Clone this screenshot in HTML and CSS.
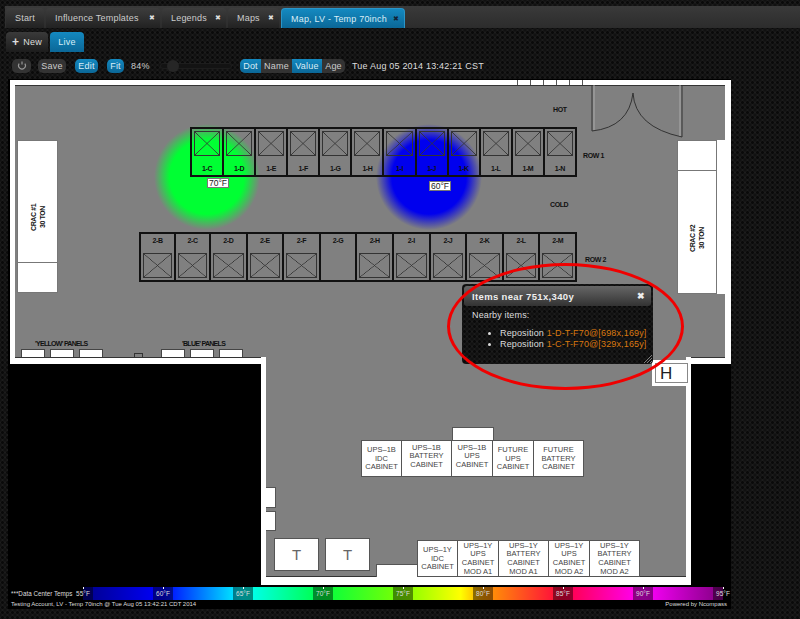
FILE: index.html
```html
<!DOCTYPE html>
<html lang="en">
<head>
    <meta charset="UTF-8">
    <title>Map, LV - Temp 70inch</title>
    <link rel="stylesheet" href="styles.css">
</head>
<body>

    <!-- Main tabs -->
    <div class="tabs">
        <div class="tab tab-start">Start</div>
        <div class="tab tab-templates">Influence Templates <span class="close">&#10006;</span></div>
        <div class="tab tab-legends">Legends <span class="close">&#10006;</span></div>
        <div class="tab tab-maps">Maps <span class="close">&#10006;</span></div>
        <div class="tab tab-active">Map, LV - Temp 70inch <span class="close">&#10006;</span></div>
    </div>

    <!-- Sub tabs -->
    <div class="subtabs">
        <div class="subtab subtab-new"><b>+</b> New</div>
        <div class="subtab subtab-live">Live</div>
    </div>

    <!-- Toolbar -->
    <div class="toolbar">
        <div class="btn btn-refresh">
            <svg width="10" height="10" viewBox="0 0 10 10"><path d="M7.8 2.6A3.4 3.4 0 1 1 2.2 2.6M5 0.5v3" fill="none" stroke="#999" stroke-width="1.2"/></svg>
        </div>
        <div class="btn btn-save">Save</div>
        <div class="btn btn-blue btn-edit">Edit</div>
        <div class="btn btn-blue btn-fit">Fit</div>
        <div class="zoom-value">84%</div>
        <div class="slider"><div class="slider-knob"></div></div>
        <div class="segments">
            <div class="segment segment-dot segment-on">Dot</div>
            <div class="segment segment-name">Name</div>
            <div class="segment segment-value segment-on">Value</div>
            <div class="segment segment-age">Age</div>
        </div>
        <div class="clock">Tue Aug 05 2014 13:42:21 CST</div>
    </div>

    <!-- Floor plan canvas -->
    <div class="map">
        <div class="walls"></div>
        <div class="top-ticks"></div>
        <div class="room-top"></div>
        <div class="walls-low"></div>
        <div class="room-low"></div>

        <div class="heat heat-green"></div>
        <div class="heat heat-blue"></div>

        <svg class="doors" width="100" height="60" viewBox="0 0 100 60">
            <path d="M1 0V46Q38 42 42 8Q44 42 91 52V0" fill="none" stroke="#333" stroke-width="1"/>
            <path d="M3 0V45M89 0V51" fill="none" stroke="#aaa" stroke-width="1"/>
        </svg>

        <div class="plan-label label-hot">HOT</div>
        <div class="plan-label label-row1">ROW 1</div>
        <div class="plan-label label-cold">COLD</div>
        <div class="plan-label label-row2">ROW 2</div>

        <!-- Row 1 -->
        <div class="row row-1">
            <div class="cell"><div class="xbox"></div><span>1-C</span></div>
            <div class="cell"><div class="xbox"></div><span>1-D</span></div>
            <div class="cell"><div class="xbox"></div><span>1-E</span></div>
            <div class="cell"><div class="xbox"></div><span>1-F</span></div>
            <div class="cell"><div class="xbox"></div><span>1-G</span></div>
            <div class="cell"><div class="xbox"></div><span>1-H</span></div>
            <div class="cell"><div class="xbox"></div><span>1-I</span></div>
            <div class="cell"><div class="xbox"></div><span>1-J</span></div>
            <div class="cell"><div class="xbox"></div><span>1-K</span></div>
            <div class="cell"><div class="xbox"></div><span>1-L</span></div>
            <div class="cell"><div class="xbox"></div><span>1-M</span></div>
            <div class="cell"><div class="xbox"></div><span>1-N</span></div>
        </div>

        <!-- Row 2 -->
        <div class="row row-2">
            <div class="cell cell-narrow"><span>2-B</span><div class="xbox"></div></div>
            <div class="cell cell-narrow"><span>2-C</span><div class="xbox"></div></div>
            <div class="cell"><span>2-D</span><div class="xbox"></div></div>
            <div class="cell"><span>2-E</span><div class="xbox"></div></div>
            <div class="cell"><span>2-F</span><div class="xbox"></div></div>
            <div class="cell"><span>2-G</span></div>
            <div class="cell"><span>2-H</span><div class="xbox"></div></div>
            <div class="cell"><span>2-I</span><div class="xbox"></div></div>
            <div class="cell"><span>2-J</span><div class="xbox"></div></div>
            <div class="cell"><span>2-K</span><div class="xbox"></div></div>
            <div class="cell"><span>2-L</span><div class="xbox"></div></div>
            <div class="cell"><span>2-M</span><div class="xbox"></div></div>
        </div>

        <div class="temp temp-70">70°F</div>
        <div class="temp temp-60">60°F</div>

        <!-- CRAC units -->
        <div class="crac crac-1">
            <div class="crac-text">CRAC #1<br>30 TON</div>
            <div class="crac-end"></div>
        </div>
        <div class="crac crac-2">
            <div class="crac-end"></div>
            <div class="crac-text">CRAC #2<br>30 TON</div>
        </div>
        <div class="crac-strip"></div>

        <!-- Panels -->
        <div class="plan-label label-yellow">'YELLOW' PANELS</div>
        <div class="panels panels-yellow"><div></div><div></div><div></div></div>
        <div class="plan-label label-blue">'BLUE' PANELS</div>
        <div class="panels panels-blue"><div></div><div></div><div></div></div>
        <div class="stub"></div>

        <!-- UPS cabinets -->
        <div class="ups-top"></div>
        <div class="cabinets cabinets-1b">
            <div class="cabinet c41">UPS–1B<br>IDC<br>CABINET</div>
            <div class="cabinet c50 raised">UPS–1B<br>BATTERY<br>CABINET</div>
            <div class="cabinet c41 raised">UPS–1B<br>UPS<br>CABINET</div>
            <div class="cabinet c41">FUTURE<br>UPS<br>CABINET</div>
            <div class="cabinet c50">FUTURE<br>BATTERY<br>CABINET</div>
        </div>

        <div class="side-box side-1"></div>
        <div class="side-box side-2"></div>
        <div class="t-box t-1">T</div>
        <div class="t-box t-2">T</div>
        <div class="low-box"></div>

        <div class="cabinets cabinets-1y">
            <div class="cabinet c41">UPS–1Y<br>IDC<br>CABINET</div>
            <div class="cabinet c41">UPS–1Y<br>UPS<br>CABINET<br>MOD A1</div>
            <div class="cabinet c50">UPS–1Y<br>BATTERY<br>CABINET<br>MOD A1</div>
            <div class="cabinet c41">UPS–1Y<br>UPS<br>CABINET<br>MOD A2</div>
            <div class="cabinet c50">UPS–1Y<br>BATTERY<br>CABINET<br>MOD A2</div>
        </div>

        <div class="h-box"><div>H</div></div>

        <!-- Popup -->
        <div class="popup">
            <div class="popup-title">Items near 751x,340y <span class="popup-close">&#10006;</span></div>
            <div class="popup-body">
                <div>Nearby items:</div>
                <ul>
                    <li>Reposition <a>1-D-T-F70@[698x,169y]</a></li>
                    <li>Reposition <a>1-C-T-F70@[329x,165y]</a></li>
                </ul>
            </div>
            <svg class="grip" width="9" height="9" viewBox="0 0 9 9"><path d="M1 9L9 1M4 9L9 4M7 9L9 7" stroke="#999" stroke-width="0.8"/></svg>
        </div>
        <div class="ring"></div>

        <!-- Temperature legend -->
        <div class="legend-title">***Data Center Temps</div>
        <div class="legend">
            <span class="stop">55°F</span>
            <span class="stop">60°F</span>
            <span class="stop">65°F</span>
            <span class="stop">70°F</span>
            <span class="stop">75°F</span>
            <span class="stop">80°F</span>
            <span class="stop">85°F</span>
            <span class="stop">90°F</span>
            <span class="stop">95°F</span>
        </div>
        <div class="footer-left">Testing Account, LV - Temp 70inch @ Tue Aug 05 13:42:21 CDT 2014</div>
        <div class="footer-right">Powered by Ncompass</div>
    </div>

</body>
</html>
```

FILE: styles.css
```css
/* Global styling */
* {
    box-sizing: border-box;
}

html, body {
    height: 100%;
}

body {
    margin: 0;
    padding: 0;
    overflow: hidden;
    color: #ddd;
    font-family: "Liberation Sans", Arial, sans-serif;
    font-size: 9px;
    letter-spacing: 0.2px;
    background-color: #111;
    background-image: radial-gradient(circle at 2.5px 2.5px, #0a0a0a 1.2px, #222 1.8px, #111 2.4px);
    background-size: 5px 5px;
}

/* Main tabs */
.tabs {
    display: flex;
    gap: 2px;
    height: 22px;
    margin: 6px 0 0 5px;
    padding-left: 1px;
    background: linear-gradient(#3a3a3a, #2c2c2c);
}

.tab {
    display: flex;
    align-items: center;
    justify-content: space-between;
    height: 20px;
    margin-top: 2px;
    padding: 0 5px 0 9px;
    color: #ccc;
    white-space: nowrap;
    background: linear-gradient(#3d3d3d, #222);
    border-radius: 4px 4px 0 0;
}

.tab-start { width: 38px; }
.tab-templates { width: 114px; }
.tab-legends { width: 64px; }
.tab-maps { width: 51px; }

.tab-active {
    width: 124px;
    color: #d8eef8;
    background: linear-gradient(#1489c0, #0b6797);
    border: 1px solid #2a95c8;
    border-bottom: none;
}

.close {
    font-size: 7px;
    color: #ddd;
}

.tab-active .close {
    color: #123;
}

/* Sub tabs */
.subtabs {
    display: flex;
    gap: 2px;
    height: 20px;
    margin: 4px 0 0 6px;
}

.subtab {
    display: flex;
    align-items: center;
    justify-content: center;
    border-radius: 4px 4px 0 0;
}

.subtab-new {
    gap: 4px;
    width: 42px;
    background: linear-gradient(#3a3a3a, #1c1c1c);
}

.subtab-new b {
    font-size: 12px;
}

.subtab-live {
    width: 34px;
    color: #d8eef8;
    background: linear-gradient(#1489c0, #0b6797);
}

/* Toolbar */
.toolbar {
    display: flex;
    align-items: center;
    height: 27px;
    padding-left: 12px;
}

.btn {
    display: flex;
    align-items: center;
    justify-content: center;
    height: 14px;
    border-radius: 5px;
    background: #333;
    color: #ccc;
}

.btn-refresh { width: 19px; }
.btn-save { width: 28px; margin-left: 7px; }
.btn-edit { width: 23px; margin-left: 9px; }
.btn-fit { width: 17px; margin-left: 9px; }

.btn-blue {
    color: #d8eef8;
    background: linear-gradient(#1489c0, #0b6797);
}

.zoom-value {
    margin-left: 7px;
    width: 29px;
    color: #ccc;
}

.slider {
    position: relative;
    width: 72px;
    height: 6px;
    background: #131313;
    border: 1px solid #1d1d1d;
    border-radius: 3px;
}

.slider-knob {
    position: absolute;
    top: -4px;
    left: 6px;
    width: 12px;
    height: 12px;
    background: #262626;
    border-radius: 50%;
}

.segments {
    display: flex;
    height: 14px;
    margin-left: 8px;
    border-radius: 5px;
    overflow: hidden;
    background: #333;
}

.segment {
    display: flex;
    align-items: center;
    justify-content: center;
    color: #ccc;
}

.segment-dot { width: 21px; }
.segment-name { width: 31px; }
.segment-value { width: 30px; }
.segment-age { width: 23px; }

.segment-on {
    color: #d8eef8;
    background: linear-gradient(#1489c0, #0b6797);
}

.clock {
    margin-left: 7px;
    color: #ddd;
}

/* Floor plan canvas: everything in here sits at its own place on the plan */
.map {
    position: relative;
    width: 723px;
    height: 530px;
    margin-left: 8px;
    background: #000;
    overflow: hidden;
    color: #111;
    letter-spacing: 0;
}

.walls {
    position: absolute;
    left: 2px;
    top: 1px;
    width: 721px;
    height: 284px;
    background: #fff;
}

.top-ticks {
    position: absolute;
    left: 509px;
    top: 1px;
    width: 68px;
    height: 5px;
    background: repeating-linear-gradient(to right, #555 0, #555 1px, transparent 1px, transparent 13px);
}

.room-top {
    position: absolute;
    left: 7px;
    top: 6px;
    width: 710px;
    height: 273px;
    background: #808080;
    border-top: 1px solid #333;
    border-bottom: 1px solid #333;
}

.walls-low {
    position: absolute;
    left: 253px;
    top: 278px;
    width: 430px;
    height: 228px;
    background: #fff;
}

.room-low {
    position: absolute;
    left: 258px;
    top: 278px;
    width: 420px;
    height: 220px;
    background: #808080;
    border-bottom: 1px solid #333;
}

.heat {
    position: absolute;
    width: 106px;
    height: 106px;
    border-radius: 50%;
}

.heat-green {
    left: 146px;
    top: 45px;
    background: radial-gradient(circle closest-side, #00ff33 0, #00ff33 70%, rgba(0, 255, 51, 0) 100%);
}

.heat-blue {
    left: 368px;
    top: 45px;
    background: radial-gradient(circle closest-side, #0000ee 0, #0000ee 70%, rgba(0, 0, 238, 0) 100%);
}

.doors {
    position: absolute;
    left: 583px;
    top: 6px;
}

.plan-label {
    position: absolute;
    font-size: 7px;
    font-weight: bold;
    letter-spacing: -0.4px;
    white-space: nowrap;
    color: #111;
}

.label-hot { left: 545px; top: 27px; }
.label-row1 { left: 575px; top: 73px; }
.label-cold { left: 542px; top: 122px; }
.label-row2 { left: 577px; top: 177px; }
.label-yellow { left: 27px; top: 261px; letter-spacing: -0.7px; }
.label-blue { left: 174px; top: 261px; letter-spacing: -0.7px; }

/* Equipment rows */
.row {
    position: absolute;
    display: flex;
    border: 2px solid #111;
}

.row-1 {
    left: 182px;
    top: 48px;
    width: 387px;
    height: 50px;
}

.row-2 {
    left: 131px;
    top: 153px;
    width: 438px;
    height: 50px;
}

.cell {
    flex: 1 1 0;
    display: flex;
    flex-direction: column;
    align-items: center;
    justify-content: space-between;
    padding: 2px;
    border-right: 2px solid #111;
    font-size: 7px;
    font-weight: bold;
    letter-spacing: -0.4px;
}

.cell:last-child {
    border-right: none;
}

.cell-narrow {
    flex: 0 0 35px;
}

.cell span {
    padding: 1px 0;
}

.xbox {
    flex: none;
    width: 100%;
    height: 25px;
    border: 1px solid #333;
    background:
        linear-gradient(to top right, transparent calc(50% - 0.6px), #333 50%, transparent calc(50% + 0.6px)),
        linear-gradient(to bottom right, transparent calc(50% - 0.6px), #333 50%, transparent calc(50% + 0.6px));
}

.temp {
    position: absolute;
    padding: 0 1px;
    height: 10px;
    line-height: 8px;
    font-size: 8.5px;
    color: #222;
    background: #fff;
    border: 1px solid #777;
}

.temp-70 { left: 199px; top: 99px; }
.temp-60 { left: 421px; top: 102px; }

/* CRAC units */
.crac {
    position: absolute;
    display: flex;
    flex-direction: column;
    background: #fff;
    border: 1px solid #777;
    color: #111;
}

.crac-1 { left: 9px; top: 61px; width: 41px; height: 153px; }
.crac-2 { left: 669px; top: 61px; width: 40px; height: 154px; }

.crac-text {
    flex: 1;
    display: flex;
    align-items: center;
    justify-content: center;
    writing-mode: vertical-rl;
    transform: rotate(180deg);
    text-align: center;
    font-size: 7px;
    font-weight: bold;
    letter-spacing: -0.4px;
    line-height: 9px;
}

.crac-1 .crac-text { margin-top: 32px; }
.crac-2 .crac-text { margin-top: 12px; }

.crac-end {
    flex: 0 0 30px;
}

.crac-1 .crac-end { border-top: 1px solid #777; }
.crac-2 .crac-end { border-bottom: 1px solid #777; }

.crac-strip {
    position: absolute;
    left: 709px;
    top: 61px;
    width: 8px;
    height: 154px;
    background: #fff;
}

/* Panels */
.panels {
    position: absolute;
    top: 270px;
    display: flex;
    gap: 5px;
}

.panels div {
    width: 24px;
    height: 8px;
    background: #fff;
    border: 1px solid #444;
    border-bottom: none;
}

.panels-yellow { left: 13px; }
.panels-blue { left: 153px; }

.stub {
    position: absolute;
    left: 126px;
    top: 274px;
    width: 9px;
    height: 4px;
    border: 1px solid #333;
    border-bottom: none;
}

/* Cabinets */
.cabinets {
    position: absolute;
    display: flex;
    height: 37px;
}

.cabinets-1b { left: 353px; top: 361px; }
.cabinets-1y { left: 409px; top: 461px; }

.cabinet {
    display: flex;
    align-items: center;
    justify-content: center;
    text-align: center;
    height: 100%;
    padding-top: 1px;
    font-size: 7.5px;
    line-height: 8.6px;
    color: #444;
    background: #fff;
    border: 1px solid #555;
    border-left-width: 0;
}

.cabinet:first-child {
    border-left-width: 1px;
}

.cabinet.raised {
    padding-bottom: 5px;
}

.c41 { width: 41px; }
.c50 { width: 50px; }

.ups-top {
    position: absolute;
    left: 444px;
    top: 348px;
    width: 42px;
    height: 14px;
    background: #fff;
    border: 1px solid #555;
}

.side-box {
    position: absolute;
    left: 258px;
    width: 10px;
    background: #fff;
    border: 1px solid #555;
    border-left: none;
}

.side-1 { top: 408px; height: 21px; }
.side-2 { top: 432px; height: 20px; }

.t-box {
    position: absolute;
    top: 459px;
    width: 45px;
    height: 33px;
    display: flex;
    align-items: center;
    justify-content: center;
    font-size: 15px;
    color: #666;
    background: #fff;
    border: 1px solid #555;
}

.t-1 { left: 266px; }
.t-2 { left: 317px; }

.low-box {
    position: absolute;
    left: 368px;
    top: 485px;
    width: 42px;
    height: 13px;
    background: #fff;
    border: 1px solid #555;
    border-bottom: none;
}

.h-box {
    position: absolute;
    left: 644px;
    top: 281px;
    width: 39px;
    height: 26px;
    padding: 3px;
    background: #fff;
}

.h-box div {
    height: 20px;
    padding-left: 4px;
    font-size: 17px;
    line-height: 20px;
    color: #222;
    border: 1px solid #888;
}

/* Popup */
.popup {
    position: absolute;
    left: 454px;
    top: 205px;
    width: 191px;
    height: 80px;
    padding: 2px;
    color: #ddd;
    background-color: #111;
    background-image: radial-gradient(circle at 2.5px 2.5px, #0a0a0a 1.2px, #222 1.8px, #111 2.4px);
    background-size: 5px 5px;
    border-radius: 4px;
}

.popup-title {
    display: flex;
    align-items: center;
    justify-content: space-between;
    height: 20px;
    padding: 0 6px 0 8px;
    font-weight: bold;
    font-size: 9.5px;
    letter-spacing: 0.35px;
    color: #eee;
    background: linear-gradient(#666, #333);
    border-radius: 3px;
}

.popup-close {
    font-size: 9px;
}

.popup-body {
    padding: 4px 8px;
    font-size: 9px;
    letter-spacing: 0.15px;
}

.popup-body ul {
    margin: 8px 0 0;
    padding: 0 0 0 28px;
    line-height: 11px;
    white-space: nowrap;
}

.popup-body a {
    color: #d9780f;
}

.grip {
    position: absolute;
    right: 1px;
    bottom: 1px;
}

.ring {
    position: absolute;
    left: 439px;
    top: 184px;
    width: 237px;
    height: 127px;
    border: 3px solid #f00000;
    border-radius: 50%;
}

/* Temperature legend */
.legend-title {
    position: absolute;
    left: 3px;
    top: 511px;
    font-size: 6.3px;
    color: #ddd;
}

.legend {
    position: absolute;
    left: 75px;
    top: 508px;
    width: 640px;
    height: 13px;
    display: flex;
    justify-content: space-between;
    background: linear-gradient(to right, #00008b 0, #0000ff 12.5%, #00ffff 25%, #00ff40 37.5%, #80ff00 50%, #ffff00 59%, #ffa000 62.5%, #ff0040 75%, #ff00ff 87.5%, #800080 100%);
}

.stop {
    position: relative;
    width: 20px;
    margin: 0 -10px;
    height: 100%;
    font-size: 6.5px;
    line-height: 13px;
    text-align: center;
    color: #ddd;
    background: rgba(0, 0, 0, 0.45);
}

/* White tick at the exact temperature */
.stop::after {
    content: "";
    position: absolute;
    left: 10px;
    top: 0;
    width: 1px;
    height: 2px;
    background: #fff;
}

.footer-left {
    position: absolute;
    left: 3px;
    top: 522px;
    font-size: 6px;
    color: #ddd;
}

.footer-right {
    position: absolute;
    right: 4px;
    top: 522px;
    font-size: 6px;
    color: #ddd;
}
```
